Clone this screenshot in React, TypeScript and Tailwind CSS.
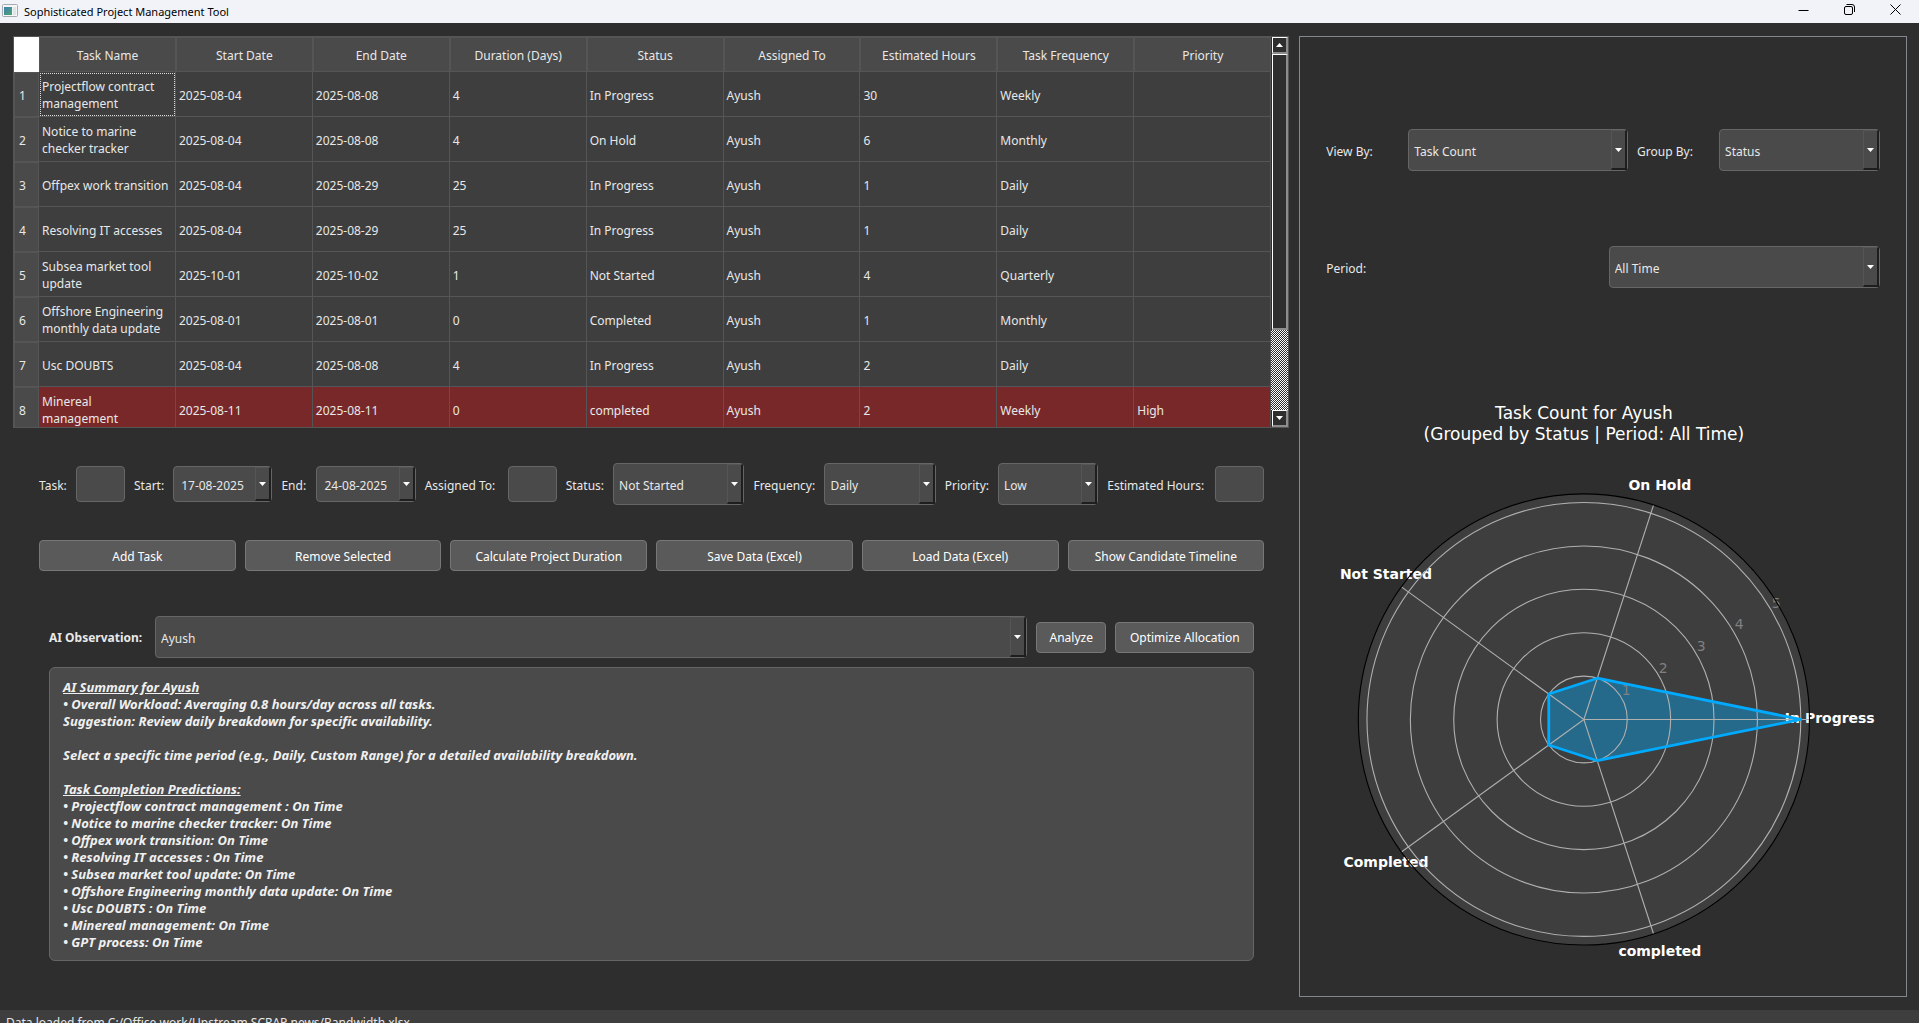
import React from "react";

const COLUMNS = [
  "Task Name",
  "Start Date",
  "End Date",
  "Duration (Days)",
  "Status",
  "Assigned To",
  "Estimated Hours",
  "Task Frequency",
  "Priority",
];

const ROWS = [
  ["Projectflow contract\nmanagement", "2025-08-04", "2025-08-08", "4", "In Progress", "Ayush", "30", "Weekly", ""],
  ["Notice to marine\nchecker tracker", "2025-08-04", "2025-08-08", "4", "On Hold", "Ayush", "6", "Monthly", ""],
  ["Offpex work transition", "2025-08-04", "2025-08-29", "25", "In Progress", "Ayush", "1", "Daily", ""],
  ["Resolving IT accesses", "2025-08-04", "2025-08-29", "25", "In Progress", "Ayush", "1", "Daily", ""],
  ["Subsea market tool\nupdate", "2025-10-01", "2025-10-02", "1", "Not Started", "Ayush", "4", "Quarterly", ""],
  ["Offshore Engineering\nmonthly data update", "2025-08-01", "2025-08-01", "0", "Completed", "Ayush", "1", "Monthly", ""],
  ["Usc DOUBTS", "2025-08-04", "2025-08-08", "4", "In Progress", "Ayush", "2", "Daily", ""],
  ["Minereal\nmanagement", "2025-08-11", "2025-08-11", "0", "completed", "Ayush", "2", "Weekly", "High"],
];

const PREDICTIONS = [
  "Projectflow contract management : On Time",
  "Notice to marine checker tracker: On Time",
  "Offpex work transition: On Time",
  "Resolving IT accesses : On Time",
  "Subsea market tool update: On Time",
  "Offshore Engineering monthly data update: On Time",
  "Usc DOUBTS : On Time",
  "Minereal management: On Time",
  "GPT process: On Time",
];

const ACTIONS = [
  "Add Task",
  "Remove Selected",
  "Calculate Project Duration",
  "Save Data (Excel)",
  "Load Data (Excel)",
  "Show Candidate Timeline",
];

function DropArrow() {
  return (
    <span className="pointer-events-none absolute top-px right-px bottom-px flex w-4 items-center justify-center border-t border-l border-r-2 border-b-2 border-t-[#555555] border-l-[#555555] border-r-[#1e1e1e] border-b-[#1e1e1e] bg-[#4a4a4a]">
      <svg width="7" height="4" viewBox="0 0 7 4" aria-hidden="true">
        <path d="M0 0h7L3.5 4z" fill="#ffffff" />
      </svg>
    </span>
  );
}

function Combo({ id, value, options, className }: { id: string; value: string; options: string[]; className: string }) {
  return (
    <div className={"relative " + className}>
      <select
        id={id}
        defaultValue={value}
        className="block h-[42px] w-full appearance-none rounded border border-[#666666] bg-[#4a4a4a] pt-0.5 pr-5 pl-[5px] text-[#e8e8e8] outline-none"
      >
        {options.map((o) => (
          <option key={o}>{o}</option>
        ))}
      </select>
      <DropArrow />
    </div>
  );
}

function DateBox({ id, value }: { id: string; value: string }) {
  return (
    <div className="relative min-w-[99px] flex-[99]">
      <input
        id={id}
        type="text"
        defaultValue={value}
        className="block h-9 w-full rounded border border-[#666666] bg-[#4a4a4a] pt-0.5 pl-[7px] text-[#e8e8e8] outline-none"
      />
      <DropArrow />
    </div>
  );
}

function TextBox({ id }: { id: string }) {
  return <input id={id} type="text" className="h-9 w-[49px] flex-none rounded border border-[#666666] bg-[#4a4a4a] px-2 text-[#e8e8e8] outline-none" />;
}

function Label({ htmlFor, className, children }: { htmlFor: string; className: string; children: React.ReactNode }) {
  return (
    <label htmlFor={htmlFor} className={"flex-none whitespace-nowrap " + className}>
      {children}
    </label>
  );
}

const BUTTON = "h-[31px] rounded border border-[#777777] bg-[#5a5a5a] pt-px text-white whitespace-nowrap";

function TitleBar() {
  return (
    <header className="flex h-[23px] flex-none items-center bg-[#f1f3f9] pr-[18px] pl-0.5 text-black">
      <svg width="16" height="16" viewBox="0 0 16 16" className="-mt-1 mr-1.5" aria-hidden="true">
        <defs>
          <linearGradient id="appIcon" x1="0" y1="0" x2="1" y2="1">
            <stop offset="0" stopColor="#3f7fb4" />
            <stop offset="1" stopColor="#4fa56c" />
          </linearGradient>
        </defs>
        <rect x="0.5" y="2.5" width="15" height="12" rx="1" fill="#f4f6f8" stroke="#a4abb1" />
        <rect x="2" y="5" width="8" height="8" fill="url(#appIcon)" />
        <rect x="11" y="5" width="3" height="8" fill="#dfe4e8" />
      </svg>
      <h1 className="flex-1 text-[11px]">Sophisticated Project Management Tool</h1>
      <div className="flex items-center gap-[35px]">
        <button type="button" aria-label="Minimize" className="-mt-1">
          <svg width="11" height="11" viewBox="0 0 11 11" aria-hidden="true">
            <path d="M0.5 6.5H10.5" stroke="#000" fill="none" />
          </svg>
        </button>
        <button type="button" aria-label="Restore" className="-mt-1">
          <svg width="11" height="11" viewBox="0 0 11 11" fill="none" stroke="#000" aria-hidden="true">
            <rect x="0.5" y="2.5" width="8" height="8" rx="1.5" />
            <path d="M2.5 0.5h5.5a2.5 2.5 0 0 1 2.5 2.5v5" />
          </svg>
        </button>
        <button type="button" aria-label="Close" className="-mt-1">
          <svg width="11" height="11" viewBox="0 0 11 11" aria-hidden="true">
            <path d="M0.5 0.5l10 10M10.5 0.5l-10 10" stroke="#000" fill="none" />
          </svg>
        </button>
      </div>
    </header>
  );
}

function ScrollBar() {
  const raised = "border-t border-l border-r-2 border-b-2 border-t-white border-l-white border-r-[#8c8c8c] border-b-[#8c8c8c] bg-[#2e2e2e]";
  return (
    <div className="flex w-[17px] flex-none flex-col bg-[#2e2e2e]">
      <button type="button" aria-label="Scroll up" className={"ml-px flex h-[17px] items-center justify-center " + raised}>
        <svg width="7" height="4" viewBox="0 0 7 4" aria-hidden="true">
          <path d="M0 4h7L3.500 0z" fill="#fff" />
        </svg>
      </button>
      <div className={"ml-px flex-[275] " + raised} />
      <div className="flex-[81] bg-[repeating-conic-gradient(#ffffff_0_25%,#2e2e2e_0_50%)] bg-[length:2px_2px]" />
      <button type="button" aria-label="Scroll down" className={"ml-px flex h-[17px] items-center justify-center " + raised}>
        <svg width="7" height="4" viewBox="0 0 7 4" aria-hidden="true">
          <path d="M0 0h7L3.500 4z" fill="#fff" />
        </svg>
      </button>
    </div>
  );
}

function TaskTable() {
  return (
    <section className="flex h-[392px] overflow-hidden border border-[#555555]">
      <div className="min-w-0 flex-1 overflow-hidden">
        <table className="w-full table-fixed border-separate border-spacing-0">
          <thead>
            <tr className="h-[35px]">
              <td className="w-[25px] bg-white p-0" />
              {COLUMNS.map((c) => (
                <th key={c} scope="col" className="border border-r border-[#555555] bg-[#4a4a4a] p-0 pt-0.5 text-center font-normal">
                  {c}
                </th>
              ))}
            </tr>
          </thead>
          <tbody>
            {ROWS.map((row, r) => (
              <tr key={row[0]} className={r === 7 ? "h-[45px] bg-[#782828]" : "h-[45px] bg-[#3e3e3e]"}>
                <th scope="row" className="border border-[#555555] bg-[#4a4a4a] p-0 pt-0.5 pl-1 text-left font-normal">
                  {r + 1}
                </th>
                {row.map((cell, c) => (
                  <td
                    key={c}
                    className={
                      "border-r border-b border-[#555555] p-0 pt-0.5 pl-[3px] leading-[17px] whitespace-pre " +
                      (r === 0 && c === 0 ? "outline-1 -outline-offset-2 outline-dotted outline-[#dddddd]" : "")
                    }
                  >
                    {cell}
                  </td>
                ))}
              </tr>
            ))}
          </tbody>
        </table>
      </div>
      <ScrollBar />
    </section>
  );
}

function TaskForm() {
  return (
    <form className="mt-[35px] flex items-center gap-[9px] pr-[25px] pl-[26px]">
      <Label htmlFor="task" className="min-w-7 pt-0.5">Task:</Label>
      <TextBox id="task" />
      <Label htmlFor="start" className="min-w-[30px] pt-0.5">Start:</Label>
      <DateBox id="start" value="17-08-2025" />
      <Label htmlFor="end" className="min-w-[26px] pt-0.5">End:</Label>
      <DateBox id="end" value="24-08-2025" />
      <Label htmlFor="assigned" className="min-w-[74px] pt-0.5">Assigned To:</Label>
      <TextBox id="assigned" />
      <Label htmlFor="status" className="min-w-[38px] pt-0.5">Status:</Label>
      <Combo id="status" value="Not Started" options={["Not Started", "In Progress", "On Hold", "Completed"]} className="min-w-0 flex-[131]" />
      <Label htmlFor="frequency" className="min-w-[62px] pt-0.5">Frequency:</Label>
      <Combo id="frequency" value="Daily" options={["Daily", "Weekly", "Monthly", "Quarterly"]} className="min-w-0 flex-[111]" />
      <Label htmlFor="priority" className="min-w-11 pt-0.5">Priority:</Label>
      <Combo id="priority" value="Low" options={["Low", "Medium", "High"]} className="min-w-0 flex-[100]" />
      <Label htmlFor="hours" className="min-w-[99px] pt-0.5">Estimated Hours:</Label>
      <TextBox id="hours" />
    </form>
  );
}

function Observation() {
  return (
    <section className="mt-[45px] mr-[35px] ml-9">
      <div className="flex items-center gap-[9px]">
        <Label htmlFor="person" className="w-[97px] font-bold">AI Observation:</Label>
        <Combo id="person" value="Ayush" options={["Ayush"]} className="min-w-0 flex-1" />
        <button type="button" className={BUTTON + " w-[70px]"}>Analyze</button>
        <button type="button" className={BUTTON + " w-[139px]"}>Optimize Allocation</button>
      </div>
      <div className="mt-[9px] rounded-md border border-[#666666] bg-[#4a4a4a] px-[13px] pt-[11px] pb-[9px] text-[13px] leading-[17px] font-bold text-[#f0f0f0] italic">
        <h2 className="underline">AI Summary for Ayush</h2>
        <p>• Overall Workload: Averaging 0.8 hours/day across all tasks.</p>
        <p>Suggestion: Review daily breakdown for specific availability.</p>
        <p className="my-[17px]">Select a specific time period (e.g., Daily, Custom Range) for a detailed availability breakdown.</p>
        <h2 className="underline">Task Completion Predictions:</h2>
        <ul>
          {PREDICTIONS.map((p) => (
            <li key={p}>• {p}</li>
          ))}
        </ul>
      </div>
    </section>
  );
}

const CX = 284;
const CY = 431;
const UNIT = 43.4;
const VALUES = [5, 1, 1, 1, 1];

function polar(index: number, radius: number) {
  const a = (index * 2 * Math.PI) / 5;
  return [CX + radius * Math.cos(a), CY - radius * Math.sin(a)];
}

function RadarChart() {
  const points = VALUES.map((v, i) => polar(i, v * UNIT).join(",")).join(" ");
  return (
    <svg viewBox="0 0 606 707" className="min-h-0 w-full flex-1 font-['DejaVu_Sans',sans-serif]" role="img" aria-label="Task Count for Ayush">
      <g fill="#ffffff" fontSize="17" textAnchor="middle">
        <text x="284" y="130">Task Count for Ayush</text>
        <text x="284" y="151">(Grouped by Status | Period: All Time)</text>
      </g>
      <circle cx={CX} cy={CY} r={UNIT * 5.2} fill="#3e3e3e" />
      <polygon points={points} fill="#00aaff" fillOpacity="0.4" />
      <g fill="#ffffff" fontSize="14" fontWeight="bold" textAnchor="middle">
        <text x="530" y="435">In Progress</text>
        <text x="360" y="201">On Hold</text>
        <text x="86" y="290">Not Started</text>
        <text x="86" y="579">Completed</text>
        <text x="360" y="668">completed</text>
      </g>
      <g fill="#808080" fontSize="14">
        <text x="322" y="407">1</text>
        <text x="359" y="385">2</text>
        <text x="397" y="363">3</text>
        <text x="435" y="341">4</text>
        <text x="472" y="319">5</text>
      </g>
      <g fill="none" stroke="#b0b0b0" strokeWidth="1.1">
        {[1, 2, 3, 4, 5].map((n) => (
          <circle key={n} cx={CX} cy={CY} r={UNIT * n} />
        ))}
        {VALUES.map((_, i) => {
          const [x, y] = polar(i, UNIT * 5.2);
          return <line key={i} x1={CX} y1={CY} x2={x} y2={y} />;
        })}
      </g>
      <circle cx={CX} cy={CY} r={UNIT * 5.2} fill="none" stroke="#000000" strokeWidth="1.1" />
      <polygon points={points} fill="none" stroke="#00aaff" strokeWidth="2.8" strokeLinejoin="round" />
    </svg>
  );
}

export default function App() {
  return (
    <div className="flex h-screen flex-col overflow-hidden bg-[#2e2e2e] font-['Noto_Sans','Open_Sans',sans-serif] text-[12px] leading-[17px] text-[#e8e8e8]">
      <TitleBar />
      <main className="grid min-h-0 flex-1 grid-cols-[minmax(0,2.1fr)_minmax(0,1fr)] gap-2.5 pt-[13px] pr-3 pb-[13px] pl-[13px]">
        <div className="flex min-w-0 flex-col">
          <TaskTable />
          <TaskForm />
          <div className="mt-[35px] grid grid-cols-6 gap-[9px] pr-[25px] pl-[26px]">
            {ACTIONS.map((a) => (
              <button key={a} type="button" className={BUTTON}>
                {a}
              </button>
            ))}
          </div>
          <Observation />
        </div>
        <aside className="flex min-h-0 flex-col border border-[#828790]">
          <div className="px-[26px] pt-[92px]">
            <div className="flex items-center gap-[9px]">
              <Label htmlFor="viewBy" className="w-[73px] pt-0.5">View By:</Label>
              <Combo id="viewBy" value="Task Count" options={["Task Count", "Hours"]} className="min-w-0 flex-[220]" />
              <Label htmlFor="groupBy" className="w-[73px] pt-0.5">Group By:</Label>
              <Combo id="groupBy" value="Status" options={["Status", "Priority"]} className="min-w-0 flex-[161]" />
            </div>
            <div className="mt-[75px] flex items-center justify-between">
              <Label htmlFor="period" className="pt-0.5">Period:</Label>
              <Combo id="period" value="All Time" options={["All Time", "Daily", "Custom Range"]} className="w-[49%]" />
            </div>
          </div>
          <RadarChart />
        </aside>
      </main>
      <footer className="h-[13px] flex-none overflow-hidden bg-[#3e3e3e] pt-1 pl-1.5">Data loaded from C:/Office work/Upstream SCRAP news/Bandwidth.xlsx</footer>
    </div>
  );
}
